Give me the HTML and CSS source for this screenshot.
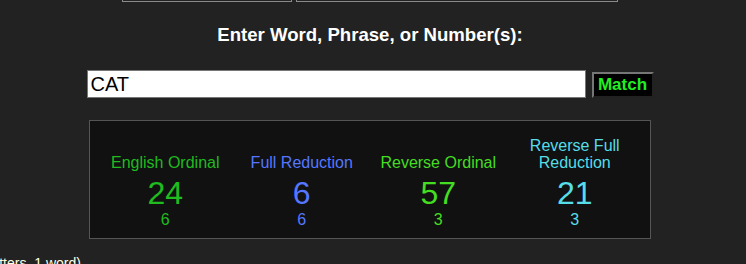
FILE: index.html
```html
<!DOCTYPE html>
<html lang="en">
  <head>
    <title>Gematria Calculator</title>
    <meta charset="UTF-8" />
    <meta name="viewport" content="width=device-width, initial-scale=1.0" />
    <link rel="stylesheet" href="styles.css">
  </head>
  <body>
    <div class="page">
      <div class="top-row">
        <div class="top-box small"></div>
        <div class="top-box wide"></div>
      </div>

      <h1 class="prompt">Enter Word, Phrase, or Number(s):</h1>

      <div class="search-row">
        <input type="text" class="search-input" id="phrase" value="CAT" />
        <button class="match-btn">Match</button>
      </div>

      <div class="results">
        <table class="cipher-table">
          <tr class="labels">
            <td class="c-english">English Ordinal</td>
            <td class="c-full">Full Reduction</td>
            <td class="c-reverse">Reverse Ordinal</td>
            <td class="c-revfull">Reverse Full Reduction</td>
          </tr>
          <tr class="totals">
            <td class="c-english">24</td>
            <td class="c-full">6</td>
            <td class="c-reverse">57</td>
            <td class="c-revfull">21</td>
          </tr>
          <tr class="subs">
            <td class="c-english">6</td>
            <td class="c-full">6</td>
            <td class="c-reverse">3</td>
            <td class="c-revfull">3</td>
          </tr>
        </table>
      </div>

      <div class="word-count">(3 letters, 1 word)</div>
    </div>
  </body>
</html>
```

FILE: styles.css
```css
html,
body {
  margin: 0;
  background-color: #222222;
  font-family: "Liberation Sans", Arial, Helvetica, sans-serif;
}

.page {
  width: 740px;
}

.top-row {
  display: flex;
  justify-content: center;
  gap: 4px;
}

.top-box {
  height: 1px;
  border: 1px solid #8a8a8a;
  border-top: none;
}

.top-box.small {
  width: 168px;
}

.top-box.wide {
  width: 320px;
}

.prompt {
  margin: 22px 0 0 0;
  text-align: center;
  color: #ffffff;
  font-size: 18.6px;
  line-height: 21px;
  font-weight: bold;
}

.search-row {
  display: flex;
  justify-content: center;
  align-items: flex-end;
  gap: 6px;
  margin-top: 25px;
}

.search-input {
  box-sizing: border-box;
  width: 499px;
  height: 28px;
  margin: 0;
  padding: 0 3px;
  border: 1px solid #767676;
  background-color: #ffffff;
  color: #000000;
  font-family: "Liberation Sans", Arial, sans-serif;
  font-size: 20px;
}

.match-btn {
  box-sizing: border-box;
  width: 62px;
  height: 26px;
  margin: 0;
  padding: 0;
  border: 2px outset #767676;
  background-color: #000000;
  color: #22ee22;
  font-family: "Liberation Sans", Arial, sans-serif;
  font-size: 17px;
  font-weight: bold;
}

.results {
  box-sizing: border-box;
  width: 562px;
  margin: 22px auto 0 auto;
  padding: 16px 7px 9px 7px;
  border: 1px solid #555555;
  background-color: #111111;
}

.cipher-table {
  width: 100%;
  table-layout: fixed;
  border-collapse: collapse;
  text-align: center;
}

.cipher-table td {
  padding: 0;
}

.labels td {
  vertical-align: bottom;
  font-size: 16px;
  line-height: 17px;
  padding: 0 10px;
}

.totals td {
  padding-top: 4px;
  font-size: 32px;
  line-height: 36px;
}

.subs td {
  font-size: 16px;
  line-height: 18px;
}

.c-english {
  color: #1fbb1f;
}

.c-full {
  color: #5577ff;
}

.c-reverse {
  color: #44dd22;
}

.c-revfull {
  color: #55dde8;
}

.word-count {
  margin: 16px 0 0 -28px;
  white-space: nowrap;
  color: #ffffe6;
  font-size: 14px;
  line-height: 16px;
}
```
